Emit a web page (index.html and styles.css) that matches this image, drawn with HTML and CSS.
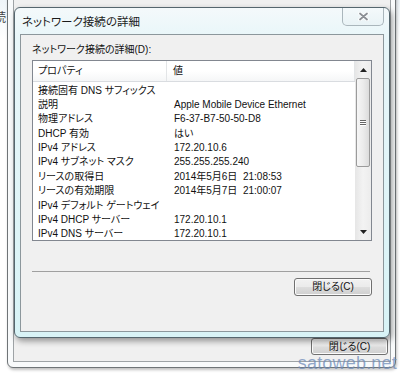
FILE: index.html
```html
<!DOCTYPE html>
<html lang="ja">
<head>
<meta charset="utf-8">
<title>ネットワーク接続の詳細</title>
<link rel="stylesheet" href="styles.css">
</head>
<body>
<div class="desk">
  <div class="behind-text">続</div>
  <div class="back">
    <div class="back-client">
      <div class="back-actions"><button class="btn back-btn">閉じる(C)</button></div>
    </div>
  </div>

  <div class="front">
    <div class="titlebar">
      <span class="title">ネットワーク接続の詳細</span>
      <div class="closebtn">
        <svg width="11" height="9" viewBox="0 0 11 9">
          <path d="M2 1.5 L9 7.5 M9 1.5 L2 7.5" stroke="#ffffff" stroke-width="3.6" stroke-linecap="round" fill="none"/>
          <path d="M2 1.5 L9 7.5 M9 1.5 L2 7.5" stroke="#8a8f95" stroke-width="1.8" stroke-linecap="round" fill="none"/>
        </svg>
      </div>
    </div>
    <div class="client">
      <div class="label">ネットワーク接続の詳細(D):</div>
      <div class="list">
        <div class="list-main">
          <div class="header">
            <div class="hcell hcell-prop">プロパティ</div>
            <div class="hcell hcell-val">値</div>
          </div>
          <div class="rows">
            <div class="c1">接続固有 DNS サフィックス</div><div class="c2"></div>
            <div class="c1">説明</div><div class="c2">Apple Mobile Device Ethernet</div>
            <div class="c1">物理アドレス</div><div class="c2">F6-37-B7-50-50-D8</div>
            <div class="c1">DHCP 有効</div><div class="c2">はい</div>
            <div class="c1">IPv4 アドレス</div><div class="c2">172.20.10.6</div>
            <div class="c1">IPv4 サブネット マスク</div><div class="c2">255.255.255.240</div>
            <div class="c1">リースの取得日</div><div class="c2">2014年5月6日  21:08:53</div>
            <div class="c1">リースの有効期限</div><div class="c2">2014年5月7日  21:00:07</div>
            <div class="c1">IPv4 デフォルト ゲートウェイ</div><div class="c2"></div>
            <div class="c1">IPv4 DHCP サーバー</div><div class="c2">172.20.10.1</div>
            <div class="c1">IPv4 DNS サーバー</div><div class="c2">172.20.10.1</div>
          </div>
        </div>
        <div class="scrollbar">
          <div class="sb-btn">
            <svg width="7" height="4" viewBox="0 0 7 4"><path d="M0 4 L3.5 0 L7 4 Z" fill="#222"/></svg>
          </div>
          <div class="sb-track">
            <div class="sb-thumb">
              <div class="grip"><i></i><i></i><i></i></div>
            </div>
          </div>
          <div class="sb-btn sb-down">
            <svg width="7" height="4" viewBox="0 0 7 4"><path d="M0 0 L7 0 L3.5 4 Z" fill="#222"/></svg>
          </div>
        </div>
      </div>
      <div class="sep"></div>
      <div class="actions"><button class="btn">閉じる(C)</button></div>
    </div>
  </div>

  <div class="watermark">satoweb.net</div>
</div>
</body>
</html>
```
FILE: styles.css
```css
* { box-sizing: border-box; }

html, body {
  margin: 0;
  padding: 0;
  background: #ffffff;
}

body {
  font-family: "Liberation Sans", "Noto Sans CJK JP", sans-serif;
  font-size: 10px;
  color: #111;
  font-feature-settings: "palt";
}

.desk {
  position: relative;
  width: 400px;
  height: 373px;
  overflow: hidden;
  display: flex;
  flex-direction: column;
  justify-content: flex-end;
  padding: 0 4px 5px 7px;
  background: linear-gradient(#eef4f8, #ffffff 40px);
}

.behind-text {
  position: absolute;
  left: -6px;
  top: 8px;
  font-size: 12px;
  color: #444;
  z-index: 2;
}

/* back (parent) window */
.back {
  flex-shrink: 0;
  height: 400px;
  border: 1px solid #6f7477;
  border-radius: 6px;
  background: #f8fafb;
  padding: 0 4px 5px 5px;
  display: flex;
  flex-direction: column;
  box-shadow: 1px 2px 3px rgba(0,0,0,0.25);
}

.back-client {
  flex: 1;
  border: 1px solid #9ea3a6;
  background: #f0f0f0;
  display: flex;
  flex-direction: column;
  justify-content: flex-end;
  padding: 0 2px 6px 0;
}

.back-actions {
  display: flex;
  justify-content: flex-end;
}

/* front dialog */
.front {
  position: absolute;
  left: 14px;
  top: 7px;
  width: 376px;
  height: 331px;
  border: 1px solid #55666e;
  border-radius: 6px;
  background: linear-gradient(#f4f9fb, #e8f6f9 30px, #d8f3f6);
  padding: 0 5px 5px 5px;
  display: flex;
  flex-direction: column;
  box-shadow: 2px 3px 6px rgba(0,0,0,0.4);
  z-index: 3;
}

.titlebar {
  height: 26px;
  flex-shrink: 0;
  display: flex;
  justify-content: space-between;
  align-items: flex-start;
}

.title {
  font-size: 11.5px;
  line-height: 26px;
  padding-left: 2px;
  color: #1b1b1b;
  font-family: "Noto Sans CJK JP", sans-serif;
}

.closebtn {
  width: 42px;
  height: 18px;
  border: 1px solid #aab6bc;
  border-top: none;
  border-radius: 0 0 5px 5px;
  background: linear-gradient(#f4f9fb, #e9f3f6);
  display: flex;
  align-items: center;
  justify-content: center;
}

.client {
  flex: 1;
  border: 1px solid #8c979c;
  background: #f0f0f0;
  padding: 8px 11px 0 11px;
  display: flex;
  flex-direction: column;
}

.label {
  line-height: 14px;
  height: 14px;
  margin-bottom: 3px;
  white-space: nowrap;
}

.list {
  height: 181px;
  flex-shrink: 0;
  border: 1px solid #828790;
  background: #ffffff;
  display: flex;
}

.list-main {
  flex: 1;
  overflow: hidden;
}

.header {
  height: 21px;
  display: flex;
  border-bottom: 1px solid #d9dce0;
  background: linear-gradient(#ffffff, #ffffff 50%, #f5f6f7);
}

.hcell {
  line-height: 20px;
  padding-left: 5px;
  white-space: nowrap;
}

.hcell-prop {
  width: 134px;
  border-right: 1px solid #e3e5e7;
}

.hcell-val {
  flex: 1;
  padding-left: 6px;
  border-right: 1px solid #e3e5e7;
}

.rows {
  display: grid;
  grid-template-columns: 135px 1fr;
  grid-auto-rows: 14.4px;
  padding-top: 1.5px;
}

.rows > div {
  line-height: 14.4px;
  white-space: pre;
}

.c1 { padding-left: 5px; }
.c2 { padding-left: 6px; }

.scrollbar {
  width: 16px;
  flex-shrink: 0;
  display: flex;
  flex-direction: column;
  background: linear-gradient(90deg, #e6e6e6, #f3f3f3 50%, #ececec);
}

.sb-btn {
  height: 17px;
  flex-shrink: 0;
  display: flex;
  align-items: center;
  justify-content: center;
}

.sb-track {
  flex: 1;
  padding: 0 1px 0 1px;
}

.sb-thumb {
  height: 89px;
  border: 1px solid #9b9b9b;
  border-radius: 2px;
  background: linear-gradient(90deg, #f6f6f6, #ececec 50%, #dcdcdc);
  display: flex;
  align-items: center;
  justify-content: center;
}

.grip {
  display: flex;
  flex-direction: column;
  gap: 1px;
}

.grip i {
  display: block;
  width: 6px;
  height: 1px;
  background: #666;
  box-shadow: 0 1px 0 #fff;
}

.sep {
  margin: 30px 2px 0 0;
  height: 1px;
  background: #a0a0a0;
  flex-shrink: 0;
}

.actions {
  display: flex;
  justify-content: flex-end;
  margin-top: 6px;
}

.btn {
  width: 78px;
  height: 18px;
  padding: 0;
  border: 1px solid #707070;
  border-radius: 3px;
  background: linear-gradient(#f2f2f2, #ebebeb 48%, #dddddd 52%, #cfcfcf);
  box-shadow: inset 0 0 0 1px #fbfbfb;
  font-family: "Liberation Sans", "Noto Sans CJK JP", sans-serif;
  font-feature-settings: "palt";
  font-size: 10px;
  color: #111;
  line-height: 16px;
}

.back-btn {
  width: 77px;
  height: 17px;
  line-height: 15px;
}

.watermark {
  position: absolute;
  right: 3px;
  bottom: 0;
  font-family: "Liberation Sans", sans-serif;
  font-size: 18px;
  line-height: 20px;
  letter-spacing: 0.2px;
  color: rgba(110, 140, 185, 0.75);
  z-index: 4;
}
```
